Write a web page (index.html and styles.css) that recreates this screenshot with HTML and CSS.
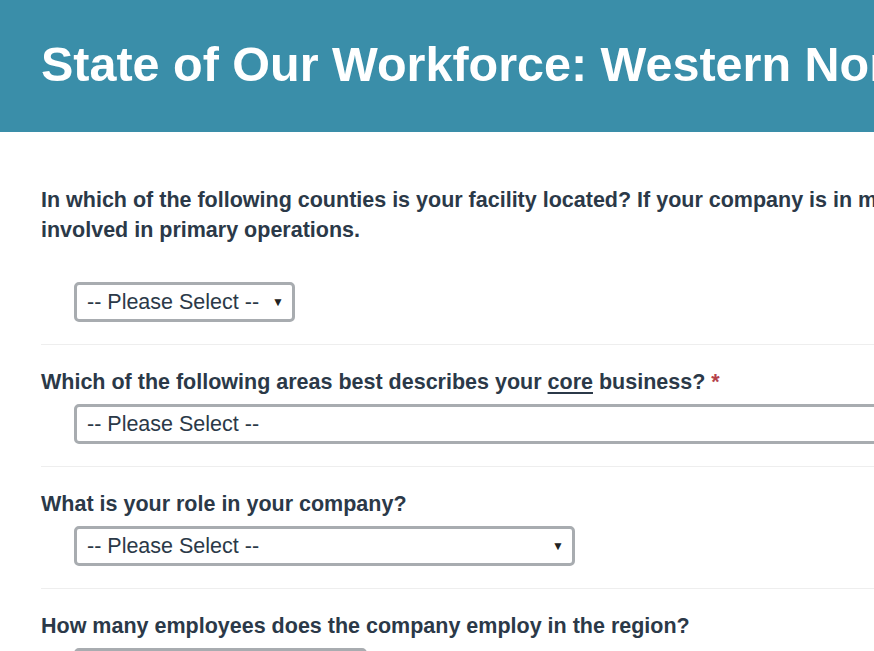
FILE: index.html
```html
<!DOCTYPE html>
<html lang="en">
<head>
<meta charset="utf-8">
<title>State of Our Workforce</title>
<link rel="stylesheet" href="styles.css">
</head>
<body>
<header class="banner">
  <h1 class="title">State of Our Workforce: Western North Carolina</h1>
</header>
<main class="form">
  <section class="question first">
    <p class="label">In which of the following counties is your facility located? If your company is in multiple counties, please select the county<br>involved in primary operations.</p>
    <div class="select w-220"><span class="value">-- Please Select --</span><span class="arrow">▼</span></div>
  </section>
  <section class="question">
    <p class="label">Which of the following areas best describes your <u>core</u> business? <span class="req">*</span></p>
    <div class="select w-1000"><span class="value">-- Please Select --</span><span class="arrow">▼</span></div>
  </section>
  <section class="question">
    <p class="label">What is your role in your company?</p>
    <div class="select w-500"><span class="value">-- Please Select --</span><span class="arrow">▼</span></div>
  </section>
  <section class="question">
    <p class="label">How many employees does the company employ in the region?</p>
    <div class="select w-292"><span class="value">-- Please Select --</span><span class="arrow">▼</span></div>
  </section>
</main>
</body>
</html>
```
FILE: styles.css
```css
html, body {
  margin: 0;
  padding: 0;
  overflow: hidden;
  background: #ffffff;
  font-family: "Liberation Sans", Arial, sans-serif;
  color: #2b3948;
}
.banner {
  background: #3a8ea9;
  height: 132px;
  box-sizing: border-box;
  padding: 31px 0 0 41px;
  width: 1500px;
}
.title {
  margin: 0;
  color: #ffffff;
  font-size: 48.5px;
  line-height: 66px;
  font-weight: bold;
  white-space: nowrap;
}
.form {
  width: 1400px;
  padding: 0 0 0 41px;
}
.question {
  border-top: 1px solid #eeeeee;
  padding: 22px 0 22px 0;
}
.question.first {
  border-top: none;
  padding-top: 53px;
}
.label {
  margin: 0;
  font-size: 21.5px;
  line-height: 30px;
  font-weight: bold;
  color: #2b3948;
}
.first .label {
  margin-bottom: 37px;
}
.label u {
  text-decoration-thickness: 2px;
  text-underline-offset: 3px;
}
.req {
  color: #b5424a;
}
.select {
  margin: 7px 0 0 33px;
  height: 40px;
  box-sizing: border-box;
  border: 3px solid #a8acb0;
  border-radius: 5px;
  background: #ffffff;
  display: flex;
  align-items: center;
  justify-content: space-between;
  padding: 0 8px 0 10px;
  font-size: 21.5px;
  color: #2b3948;
}
.first .select {
  margin-top: 0;
}
.arrow {
  font-size: 12px;
  color: #222222;
}
.w-220 { width: 221px; }
.w-1000 { width: 1100px; }
.w-500 { width: 501px; }
.w-292 { width: 293px; }
```
